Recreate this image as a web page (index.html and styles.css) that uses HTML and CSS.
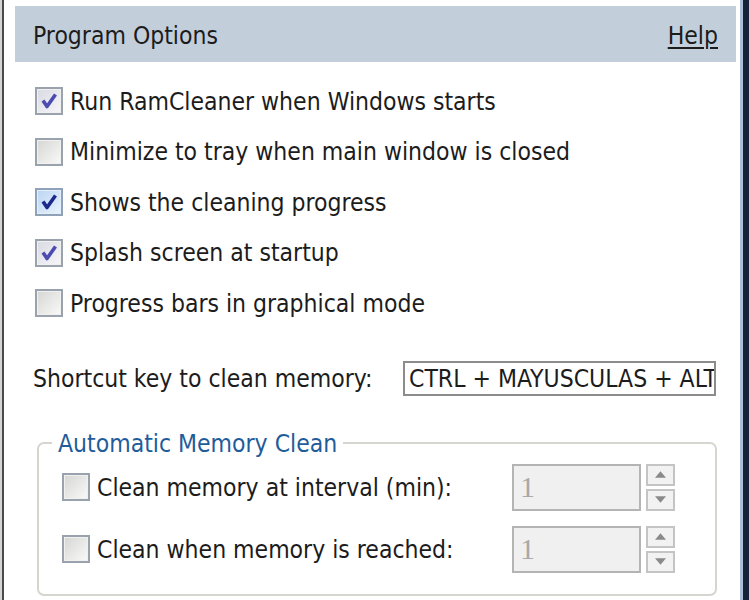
FILE: index.html
```html
<!DOCTYPE html>
<html>
<head>
<meta charset="utf-8">
<link rel="stylesheet" href="styles.css">
</head>
<body>
<div class="frame">
  <div class="edge-left"></div>
  <div class="content">
    <div class="header">
      <span class="title">Program Options</span>
      <span class="help">Help</span>
    </div>
    <div class="options">
      <div class="row">
        <svg class="cb" viewBox="0 0 28 28"><rect x="1" y="1" width="26" height="26" fill="#f0f0ee" stroke="#9aa3ad" stroke-width="2"/><rect x="3" y="3" width="22" height="22" fill="url(#g1)"/><path d="M8 13.5 L12 19.5 L20.5 7.5" fill="none" stroke="#4b4bb0" stroke-width="3.6" stroke-linejoin="round"/>
          <defs><linearGradient id="g1" x1="0" y1="0" x2="1" y2="1"><stop offset="0" stop-color="#d9dae3"/><stop offset="1" stop-color="#f6f6f9"/></linearGradient></defs></svg>
        <span>Run RamCleaner when Windows starts</span>
      </div>
      <div class="row">
        <svg class="cb" viewBox="0 0 28 28"><rect x="1" y="1" width="26" height="26" fill="#f0f0ee" stroke="#9aa3ad" stroke-width="2"/><rect x="3" y="3" width="22" height="22" fill="url(#g2)"/>
          <defs><linearGradient id="g2" x1="0" y1="0" x2="1" y2="1"><stop offset="0" stop-color="#d7d7d4"/><stop offset="1" stop-color="#f8f8f8"/></linearGradient></defs></svg>
        <span>Minimize to tray when main window is closed</span>
      </div>
      <div class="row">
        <svg class="cb" viewBox="0 0 28 28"><rect x="1" y="1" width="26" height="26" fill="#e4eefa" stroke="#8fa2b8" stroke-width="2"/><rect x="3" y="3" width="22" height="22" fill="url(#g3)"/><path d="M8 13.5 L12 19.5 L20.5 7.5" fill="none" stroke="#1c2a8c" stroke-width="3.6" stroke-linejoin="round"/>
          <defs><linearGradient id="g3" x1="0" y1="0" x2="1" y2="1"><stop offset="0" stop-color="#bcd6f2"/><stop offset="1" stop-color="#e8f2fc"/></linearGradient></defs></svg>
        <span>Shows the cleaning progress</span>
      </div>
      <div class="row">
        <svg class="cb" viewBox="0 0 28 28"><rect x="1" y="1" width="26" height="26" fill="#f0f0ee" stroke="#9aa3ad" stroke-width="2"/><rect x="3" y="3" width="22" height="22" fill="url(#g1)"/><path d="M8 13.5 L12 19.5 L20.5 7.5" fill="none" stroke="#4b4bb0" stroke-width="3.6" stroke-linejoin="round"/></svg>
        <span>Splash screen at startup</span>
      </div>
      <div class="row">
        <svg class="cb" viewBox="0 0 28 28"><rect x="1" y="1" width="26" height="26" fill="#f0f0ee" stroke="#9aa3ad" stroke-width="2"/><rect x="3" y="3" width="22" height="22" fill="url(#g2)"/></svg>
        <span>Progress bars in graphical mode</span>
      </div>
    </div>
    <div class="shortcut">
      <span class="label">Shortcut key to clean memory:</span>
      <div class="textbox"><span>CTRL + MAYUSCULAS + ALT</span></div>
    </div>
    <fieldset class="group">
      <legend>Automatic Memory Clean</legend>
      <div class="grow">
        <svg class="cb" viewBox="0 0 28 28"><rect x="1" y="1" width="26" height="26" fill="#f0f0ee" stroke="#9aa3ad" stroke-width="2"/><rect x="3" y="3" width="22" height="22" fill="url(#g2)"/></svg>
        <span class="glabel">Clean memory at interval (min):</span>
        <div class="spin">
          <div class="spinbox">1</div>
          <div class="spinbtns">
            <div class="sbtn"><svg viewBox="0 0 10 6" class="arr"><path d="M0 6 L5 0 L10 6 Z" fill="#8a8a8a"/></svg></div>
            <div class="sbtn"><svg viewBox="0 0 10 6" class="arr"><path d="M0 0 L5 6 L10 0 Z" fill="#8a8a8a"/></svg></div>
          </div>
        </div>
      </div>
      <div class="grow">
        <svg class="cb" viewBox="0 0 28 28"><rect x="1" y="1" width="26" height="26" fill="#f0f0ee" stroke="#9aa3ad" stroke-width="2"/><rect x="3" y="3" width="22" height="22" fill="url(#g2)"/></svg>
        <span class="glabel">Clean when memory is reached:</span>
        <div class="spin">
          <div class="spinbox">1</div>
          <div class="spinbtns">
            <div class="sbtn"><svg viewBox="0 0 10 6" class="arr"><path d="M0 6 L5 0 L10 6 Z" fill="#8a8a8a"/></svg></div>
            <div class="sbtn"><svg viewBox="0 0 10 6" class="arr"><path d="M0 0 L5 6 L10 0 Z" fill="#8a8a8a"/></svg></div>
          </div>
        </div>
      </div>
    </fieldset>
  </div>
  <div class="edge-right"></div>
</div>
</body>
</html>
```

FILE: styles.css
```css
html, body {
  margin: 0;
  padding: 0;
  background: #ffffff;
}
body {
  font-family: "DejaVu Sans Condensed", "DejaVu Sans", sans-serif;
  font-size: 24.5px;
  color: #1c1c1c;
}
.frame {
  display: flex;
  width: 749px;
  height: 600px;
  overflow: hidden;
}
.edge-left {
  width: 2px;
  border-left: 2px solid #d4d4d4;
  background: #4a4a4a;
  flex: none;
}
.edge-right {
  width: 6px;
  border-left: 3px solid #a9c0da;
  background: #14243a;
  flex: none;
}
.content {
  flex: 1;
  background: #fff;
  display: flex;
  flex-direction: column;
  padding-right: 4px;
  min-width: 0;
}
.header {
  margin: 6px 0 0 11px;
  height: 56px;
  box-sizing: border-box;
  background: #c2cfdb;
  display: flex;
  align-items: center;
  justify-content: space-between;
  padding: 3px 18px 0 18px;
  flex: none;
}
.help {
  text-decoration: underline;
  text-underline-offset: 3px;
}
.options {
  margin-top: 14px;
  display: flex;
  flex-direction: column;
  flex: none;
}
.row {
  height: 50.5px;
  display: flex;
  align-items: center;
  padding-left: 31px;
  white-space: nowrap;
}
.cb {
  width: 28px;
  height: 28px;
  flex: none;
  margin-right: 7px;
}
.shortcut {
  margin-top: 32px;
  display: flex;
  align-items: center;
  padding-left: 29px;
  flex: none;
}
.label {
  width: 370px;
  flex: none;
  white-space: nowrap;
}
.textbox {
  width: 305px;
  height: 31px;
  border: 2px solid #8c8c8c;
  background: #fff;
  overflow: hidden;
  white-space: nowrap;
  display: flex;
  align-items: center;
  padding-left: 4px;
  box-sizing: content-box;
  flex: none;
}
.group {
  margin: 33px 19px 0 33px;
  border: 2px solid #d6d6d0;
  border-radius: 7px;
  padding: 6px 20px 21px 23px;
  min-width: 0;
  flex: none;
}
.group legend {
  color: #1f5c9a;
  padding: 0 6px;
  margin-left: -10px;
  white-space: nowrap;
}
.grow {
  display: flex;
  align-items: center;
  height: 47px;
  white-space: nowrap;
}
.grow + .grow {
  margin-top: 15px;
}
.glabel {
  width: 415px;
  flex: none;
}
.spin {
  display: flex;
  align-items: center;
  gap: 5px;
}
.spinbox {
  width: 119px;
  height: 43px;
  border: 2px solid #b4b4b4;
  background: #f0f0f0;
  color: #a8a8a8;
  font-family: "Liberation Serif", serif;
  font-size: 30px;
  display: flex;
  align-items: center;
  padding-left: 6px;
  box-sizing: content-box;
}
.spinbtns {
  display: flex;
  flex-direction: column;
  gap: 3px;
}
.sbtn {
  width: 25px;
  height: 18px;
  border: 2px solid #c4c4c4;
  background: #f2f2f2;
  display: flex;
  align-items: center;
  justify-content: center;
}
.arr {
  width: 11px;
  height: 7px;
}
```
